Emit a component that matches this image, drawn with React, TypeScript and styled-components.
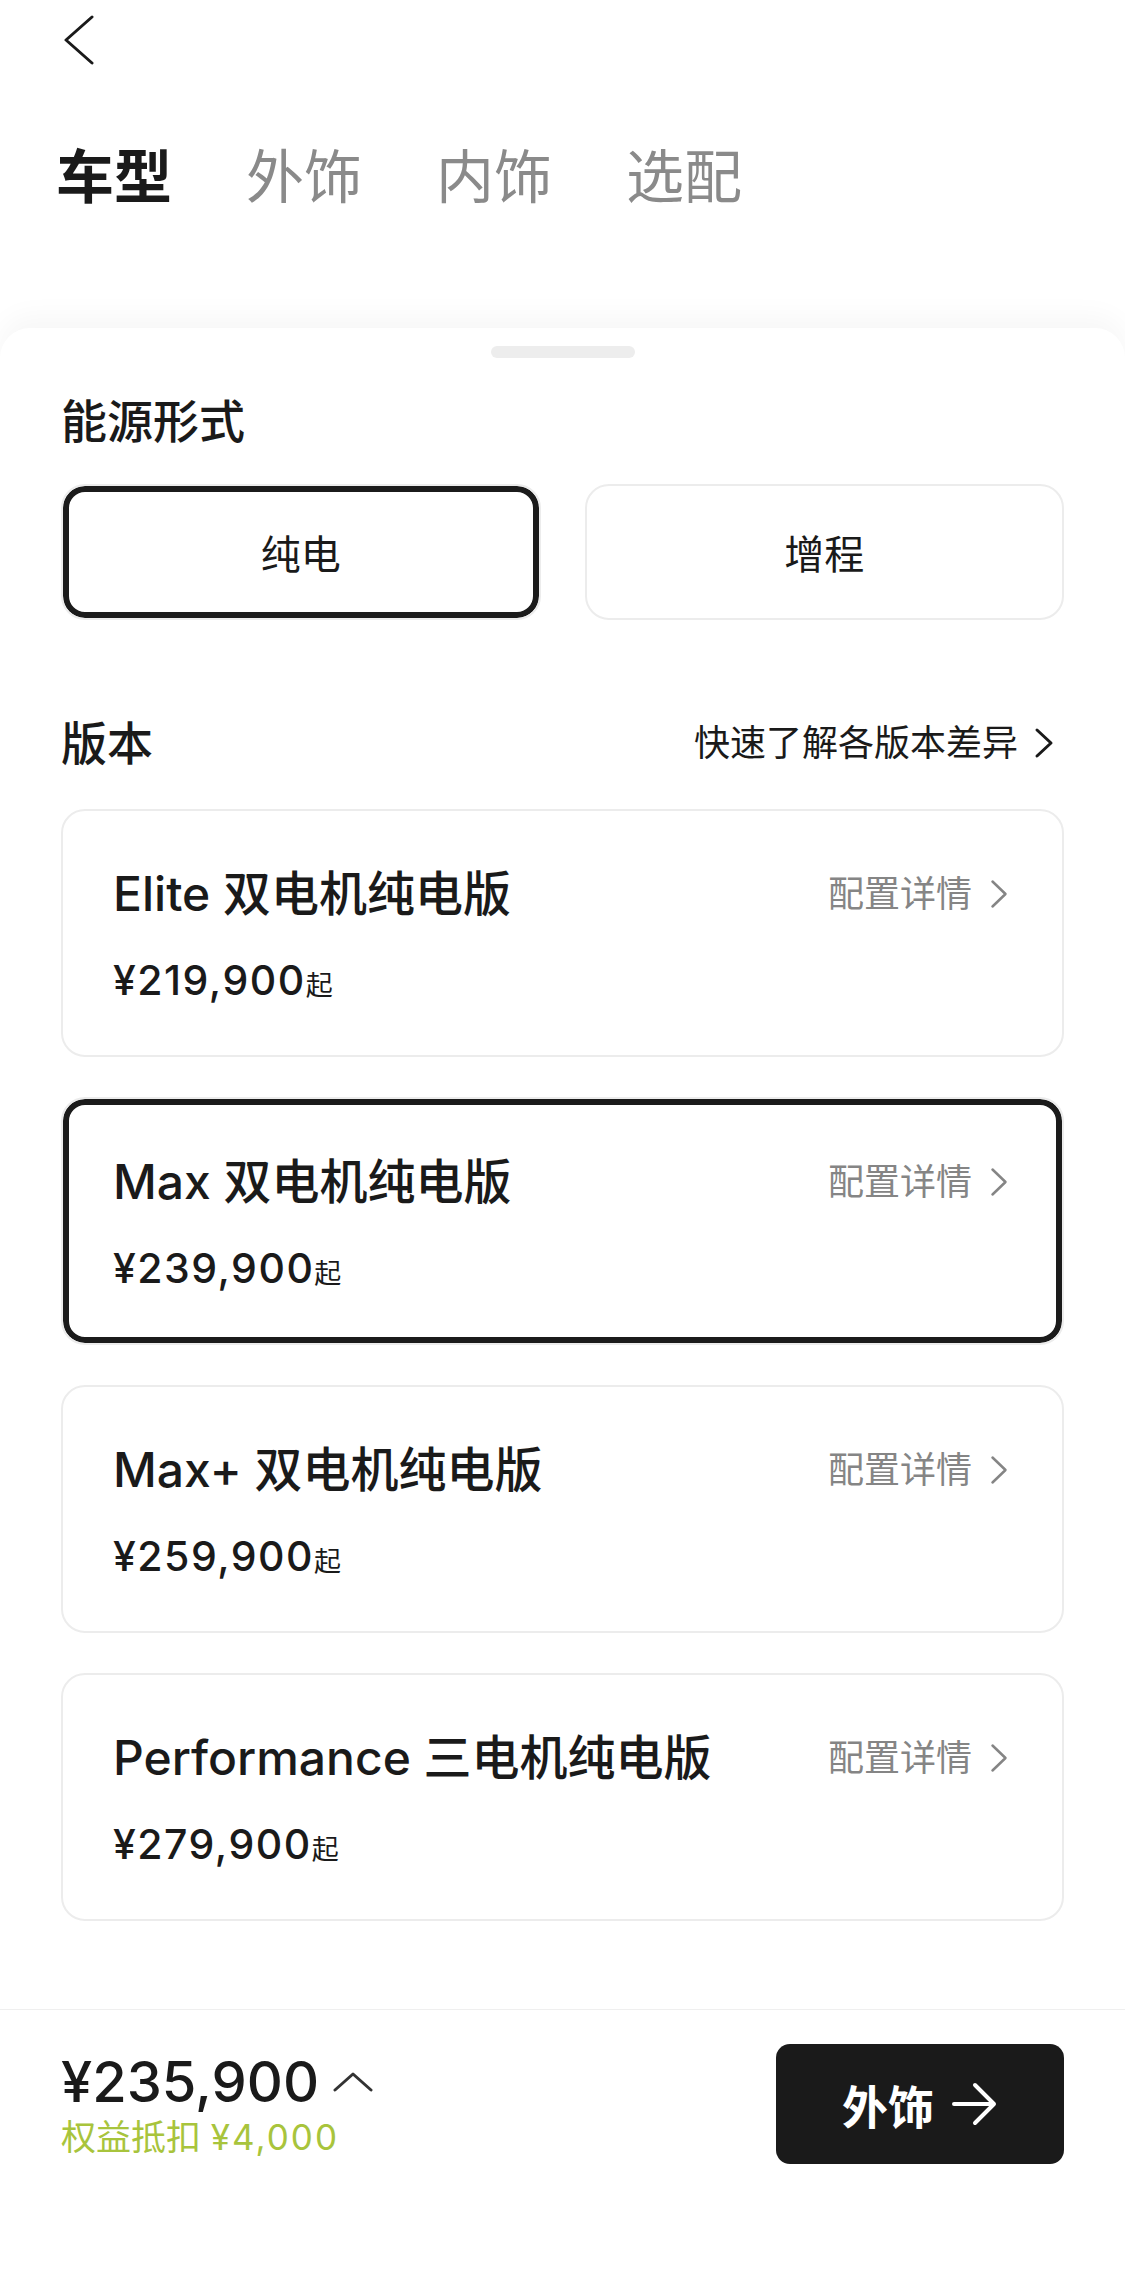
import React from "react";
import styled, { createGlobalStyle, css } from "styled-components";

const GlobalStyle = createGlobalStyle`
  html, body {
    margin: 0;
    padding: 0;
    background: #ffffff;
  }
  body {
    font-family: Inter, "Noto Sans CJK SC", sans-serif;
    color: #1a1a1a;
  }
  * {
    box-sizing: border-box;
  }
`;

const Page = styled.div`
  display: flex;
  flex-direction: column;
  min-height: 100vh;
  background: #ffffff;
`;

const TopBar = styled.div`
  height: 100px;
  padding: 15px 0 0 63px;
`;

const BackButton = styled.button`
  border: none;
  background: none;
  padding: 0;
  display: block;
  width: 32px;
  height: 50px;
  cursor: pointer;
`;

const Tabs = styled.nav`
  display: flex;
  gap: 74px;
  margin-top: 48px;
  padding-left: 56px;
`;

const Tab = styled.span<{ $active?: boolean }>`
  font-size: 58px;
  line-height: 58px;
  font-weight: ${(p) => (p.$active ? 700 : 400)};
  color: ${(p) => (p.$active ? "#1a1a1a" : "#8a8a8a")};
`;

const Sheet = styled.section`
  flex: 1;
  margin-top: 122px;
  background: #ffffff;
  border-radius: 30px 30px 0 0;
  box-shadow: 0 -12px 28px rgba(0, 0, 0, 0.035);
  padding: 18px 61px 0;
`;

const Handle = styled.div`
  width: 144px;
  height: 12px;
  border-radius: 6px;
  background: #ededed;
  margin: 0 auto;
`;

const SectionTitle = styled.h2`
  margin: 0;
  font-size: 46px;
  line-height: 46px;
  font-weight: 500;
`;

const EnergyTitle = styled(SectionTitle)`
  margin-top: 40px;
`;

const OptionGrid = styled.div`
  display: grid;
  grid-template-columns: 1fr 1fr;
  gap: 44px;
  margin-top: 40px;
`;

const selectedRing = css`
  box-shadow: inset 0 0 0 6px #1b1b1b;
`;

const Option = styled.button<{ $active?: boolean }>`
  height: 136px;
  border: 2px solid #ececec;
  border-radius: 24px;
  background: #ffffff;
  font-family: inherit;
  font-size: 40px;
  color: #1a1a1a;
  cursor: pointer;
  ${(p) => p.$active && selectedRing}
`;

const VersionHeader = styled.div`
  display: flex;
  align-items: center;
  justify-content: space-between;
  margin-top: 100px;
`;

const CompareLink = styled.a`
  display: flex;
  align-items: center;
  gap: 16px;
  font-size: 36px;
  line-height: 36px;
  color: #1a1a1a;
  padding-right: 10px;
`;

const CardList = styled.div`
  display: flex;
  flex-direction: column;
  gap: 40px;
  margin-top: 43px;
`;

const Card = styled.div<{ $active?: boolean }>`
  height: 248px;
  border: 2px solid #ececec;
  border-radius: 24px;
  padding: 59px 54px 0 50px;
  background: #ffffff;
  ${(p) => p.$active && selectedRing}
`;

const CardTop = styled.div`
  display: flex;
  align-items: center;
  justify-content: space-between;
  height: 48px;
`;

const CardTitle = styled.div`
  font-size: 48px;
  line-height: 48px;
  font-weight: 500;
  white-space: nowrap;
`;

const DetailLink = styled.span`
  display: flex;
  align-items: center;
  gap: 18px;
  font-size: 36px;
  line-height: 36px;
  color: #858585;
`;

const CardPrice = styled.div`
  margin-top: 42px;
  font-size: 41px;
  line-height: 41px;
  font-weight: 500;
  letter-spacing: 1.5px;
`;

const Suffix = styled.span`
  font-size: 27px;
  font-weight: 400;
  letter-spacing: 0;
`;

const BottomBar = styled.footer`
  height: 260px;
  border-top: 1px solid #efefef;
  padding: 34px 61px 0 61px;
  background: #ffffff;
`;

const BottomRow = styled.div`
  display: flex;
  align-items: center;
  justify-content: space-between;
  height: 120px;
`;

const Total = styled.div`
  display: flex;
  flex-direction: column;
`;

const TotalPrice = styled.div`
  display: flex;
  align-items: center;
  gap: 14px;
  font-size: 56px;
  line-height: 56px;
  font-weight: 500;
`;

const Discount = styled.div`
  margin-top: 9px;
  font-size: 35px;
  line-height: 36px;
  color: #a8c43c;
`;

const Amount = styled.span`
  letter-spacing: 2px;
`;

const NextButton = styled.button`
  display: flex;
  align-items: center;
  justify-content: center;
  gap: 18px;
  width: 288px;
  height: 120px;
  border: none;
  border-radius: 14px;
  background: #1a1a1a;
  color: #ffffff;
  font-family: inherit;
  font-size: 46px;
  font-weight: 700;
  cursor: pointer;
`;

const versions = [
  { name: "Elite 双电机纯电版", price: "¥219,900" },
  { name: "Max 双电机纯电版", price: "¥239,900", active: true },
  { name: "Max+ 双电机纯电版", price: "¥259,900" },
  { name: "Performance 三电机纯电版", price: "¥279,900" },
];

const Chevron = ({ color, w, h, sw }: { color: string; w: number; h: number; sw: number }) => (
  <svg width={w} height={h} viewBox={`0 0 ${w} ${h}`} fill="none">
    <path
      d={`M${sw} ${sw} L${w - sw} ${h / 2} L${sw} ${h - sw}`}
      stroke={color}
      strokeWidth={sw}
      strokeLinecap="round"
      strokeLinejoin="round"
    />
  </svg>
);

const App = () => {
  return (
    <>
      <GlobalStyle />
      <Page>
        <TopBar>
          <BackButton aria-label="返回">
            <svg width="32" height="50" viewBox="0 0 32 50" fill="none">
              <path
                d="M29 2 L3 25 L29 48"
                stroke="#1a1a1a"
                strokeWidth="3"
                strokeLinecap="round"
                strokeLinejoin="round"
              />
            </svg>
          </BackButton>
        </TopBar>
        <Tabs>
          <Tab $active>车型</Tab>
          <Tab>外饰</Tab>
          <Tab>内饰</Tab>
          <Tab>选配</Tab>
        </Tabs>

        <Sheet>
          <Handle />
          <EnergyTitle>能源形式</EnergyTitle>
          <OptionGrid>
            <Option $active>纯电</Option>
            <Option>增程</Option>
          </OptionGrid>

          <VersionHeader>
            <SectionTitle>版本</SectionTitle>
            <CompareLink>
              快速了解各版本差异
              <Chevron color="#1a1a1a" w={20} h={32} sw={3} />
            </CompareLink>
          </VersionHeader>

          <CardList>
            {versions.map((v) => (
              <Card key={v.name} $active={v.active}>
                <CardTop>
                  <CardTitle>{v.name}</CardTitle>
                  <DetailLink>
                    配置详情
                    <Chevron color="#858585" w={18} h={30} sw={2.5} />
                  </DetailLink>
                </CardTop>
                <CardPrice>
                  {v.price}
                  <Suffix>起</Suffix>
                </CardPrice>
              </Card>
            ))}
          </CardList>
        </Sheet>

        <BottomBar>
          <BottomRow>
            <Total>
              <TotalPrice>
                ¥235,900
                <svg width="40" height="20" viewBox="0 0 40 20" fill="none">
                  <path
                    d="M2 18 L20 2 L38 18"
                    stroke="#333333"
                    strokeWidth="3"
                    strokeLinecap="round"
                    strokeLinejoin="round"
                  />
                </svg>
              </TotalPrice>
              <Discount>
                权益抵扣 <Amount>¥4,000</Amount>
              </Discount>
            </Total>
            <NextButton>
              外饰
              <svg width="46" height="44" viewBox="0 0 46 44" fill="none">
                <path
                  d="M2 22 H42 M23 3 L42 22 L23 41"
                  stroke="#ffffff"
                  strokeWidth="4"
                  strokeLinecap="round"
                  strokeLinejoin="round"
                />
              </svg>
            </NextButton>
          </BottomRow>
        </BottomBar>
      </Page>
    </>
  );
};

export default App;
